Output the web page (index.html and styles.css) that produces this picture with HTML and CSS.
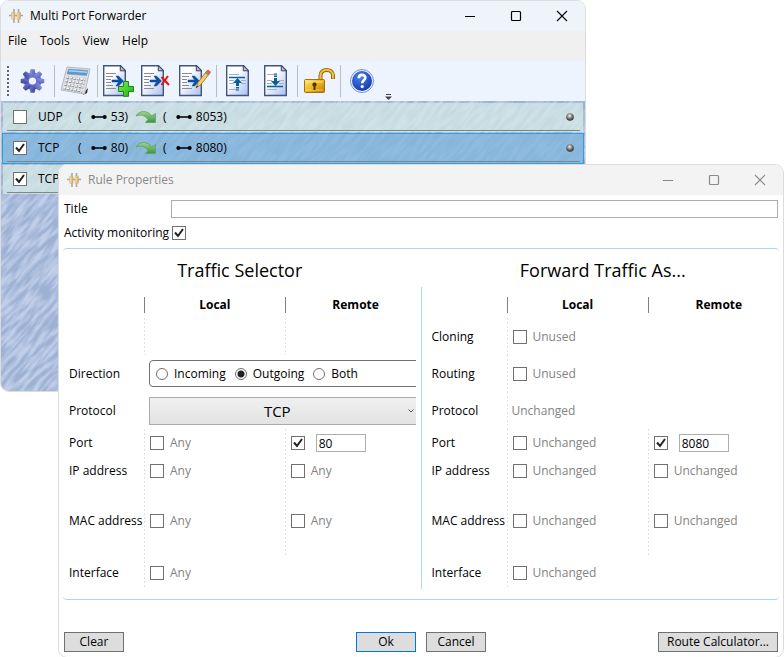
FILE: index.html
```html
<!DOCTYPE html>
<html lang="en">
<head>
<meta charset="utf-8">
<title>Multi Port Forwarder</title>
<link rel="stylesheet" href="styles.css">
</head>
<body>
<svg class="defs" aria-hidden="true">
  <defs>
    <linearGradient id="paper" x1="0" y1="0" x2="1" y2="1"><stop offset=".35" stop-color="#fff"/><stop offset="1" stop-color="#a9bdf0"/></linearGradient>
    <linearGradient id="gold" x1="0" y1="0" x2="1" y2="1"><stop offset="0" stop-color="#ffe98a"/><stop offset=".5" stop-color="#eeb51c"/><stop offset="1" stop-color="#b87800"/></linearGradient>
    <linearGradient id="leaf" x1="0" y1="0" x2="0" y2="1"><stop offset="0" stop-color="#a2d490"/><stop offset="1" stop-color="#3f9440"/></linearGradient>
    <linearGradient id="violet" x1="0" y1="0" x2="1" y2="1"><stop offset="0" stop-color="#8d96e6"/><stop offset="1" stop-color="#3a3f9c"/></linearGradient>
    <linearGradient id="lamp" x1="0" y1="0" x2="1" y2="0"><stop offset="0" stop-color="#fbeab8"/><stop offset="1" stop-color="#dfa548"/></linearGradient>
    <linearGradient id="plus" x1="0" y1="0" x2="1" y2="1"><stop offset="0" stop-color="#7df05a"/><stop offset="1" stop-color="#1cb010"/></linearGradient>
    <radialGradient id="ball" cx=".45" cy=".35" r=".6"><stop offset="0" stop-color="#fff"/><stop offset=".4" stop-color="#999"/><stop offset="1" stop-color="#333"/></radialGradient>
    <radialGradient id="blue" cx=".4" cy=".3" r=".8"><stop offset="0" stop-color="#4f83ea"/><stop offset="1" stop-color="#0b32a8"/></radialGradient>
    <filter id="weave" x="0" y="0" width="100%" height="100%" color-interpolation-filters="sRGB">
      <feTurbulence type="fractalNoise" baseFrequency=".05 .26" numOctaves="2" seed="8"/>
      <feColorMatrix values="0 0 0 0 .5  0 0 0 0 .6  0 0 0 0 .76  3 0 0 0 -1"/>
    </filter>
    <symbol id="app" viewBox="0 0 14 14">
      <path d="M0 6.500H14M5 0V14M9.500 0V14" stroke="#a7a9ae" stroke-width="1.600" fill="none"/>
      <rect x="2.500" y="3" width="3.500" height="7.500" rx="1" fill="url(#lamp)" stroke="#b4a68c" stroke-width=".5"/><rect x="8" y="3" width="3.500" height="7.500" rx="1" fill="url(#lamp)" stroke="#b4a68c" stroke-width=".5"/>
    </symbol>
    <symbol id="page" viewBox="0 0 24 32">
      <path d="M.7.7H17.500L22.300 5.500V30.500H.7Z" fill="url(#paper)" stroke="#42557f" stroke-width="1.400"/>
      <path d="M17.300.7V5.800H22.500Z" fill="#b9c0cc" stroke="#37425e"/>
    </symbol>
    <symbol id="rule" viewBox="0 0 32 32">
      <use href="#page" width="24" height="32"/>
      <path d="M3 8.500H13M3 11.500H10M3 14.500H8M3 17.500H8M3 20.500H10M3 23.500H13" stroke="#8a8d99"/>
      <path d="M9 15H15.500L13 11H15.500L20.500 16L15.500 21H13L15.500 17H9Z" fill="#0a4fa6" stroke="#0a4fa6" stroke-width=".5"/>
    </symbol>
    <symbol id="lines" viewBox="0 0 24 32">
      <use href="#page" width="24" height="32"/>
      <path d="M3 9.500H13M3 15.500H8M15 15.500H20M3 18.500H8M15 18.500H20M3 24.500H13" stroke="#a4b0c9"/>
    </symbol>
    <symbol id="link" viewBox="0 0 16 6"><path d="M2 3H14" stroke="#000" stroke-width="1.500"/><circle cx="2.300" cy="3" r="2"/><circle cx="13.700" cy="3" r="2"/></symbol>
    <symbol id="jump" viewBox="0 0 22 14"><path d="M1 6C4 0 13 0 16.500 6L20.500 3.500V12.500H10.500L13 9.500C10 5.500 6 4 1 6Z" fill="url(#leaf)" stroke="#5ba65a" stroke-width=".8"/></symbol>
    <symbol id="min" viewBox="0 0 12 12"><path d="M1 6.500H11" stroke="currentColor"/></symbol>
    <symbol id="max" viewBox="0 0 12 12"><rect x="1.500" y="1.500" width="9" height="9" rx="1" fill="none" stroke="currentColor" stroke-width="1.200"/></symbol>
    <symbol id="close" viewBox="0 0 12 12"><path d="M1 1L11 11M11 1L1 11" stroke="currentColor" stroke-width="1.100"/></symbol>
  </defs>
</svg>
<main class="desktop">
  <section class="window main-window" aria-label="Multi Port Forwarder">
    <header class="titlebar">
      <svg class="app-icon"><use href="#app"/></svg>
      <span class="caption">Multi Port Forwarder</span>
      <button class="winbtn" aria-label="Minimize"><svg><use href="#min"/></svg></button>
      <button class="winbtn" aria-label="Maximize"><svg><use href="#max"/></svg></button>
      <button class="winbtn" aria-label="Close"><svg><use href="#close"/></svg></button>
    </header>
    <nav class="menu"><button>File</button><button>Tools</button><button>View</button><button>Help</button></nav>
    <div class="toolbar">
      <span class="grip"></span>
      <div class="group">
        <button aria-label="Settings"><svg viewBox="0 0 32 32"><g transform="translate(15.500 16)"><g fill="url(#violet)"><circle r="8.800"/><path id="teeth" d="M-2.800-8L-2-11.800H2L2.800-8V8L2 11.800H-2L-2.800 8Z"/><use href="#teeth" transform="rotate(45)"/><use href="#teeth" transform="rotate(90)"/><use href="#teeth" transform="rotate(135)"/></g><circle r="5" fill="#6a70cc"/><circle r="3.600" fill="#edf4fd"/></g></svg></button>
      </div>
      <div class="group">
        <button aria-label="Calculator"><svg viewBox="0 0 32 32"><path d="M24 28L28 23L27 28L23 30Z" fill="#222"/><path d="M7 2L30 4L24.500 29L1 25Z" fill="#dfe1e5" stroke="#b6b9c0"/><path d="M8.500 4L28 5.500L26.500 10.500L7 9Z" fill="#5d97cb" stroke="#6f9cc4" stroke-width=".6"/><path d="M9 5L27.500 6.500L27 8L8.500 6.500Z" fill="#a9d2ee"/><path d="M6.500 12.500L25.500 15M5.500 16L24.500 18.500M4.500 19.500L23.500 22.500M3.500 23L22.500 26.500" stroke="#8b8f98" stroke-width="2.600" stroke-dasharray="2.600 1"/><path d="M6.500 12L25.500 14.500M5.500 15.500L24.500 18M4.500 19L23.500 22M3.500 22.500L22.500 26" stroke="#fff" stroke-width="1.600" stroke-dasharray="2 1.600"/></svg></button>
      </div>
      <div class="group">
        <button aria-label="Add rule"><svg viewBox="0 0 32 32"><use href="#rule" width="32" height="32"/><path d="M20.500 16.500H25.500V21.500H30.500V26.500H25.500V31.300H20.500V26.500H15.500V21.500H20.500Z" fill="url(#plus)" stroke="#168a10"/></svg></button>
        <button aria-label="Delete rule"><svg viewBox="0 0 32 32"><use href="#rule" width="32" height="32"/><path d="M20.500 12L28 20M27 11L20.500 20" stroke="#e80c0c" stroke-width="1.900"/></svg></button>
        <button aria-label="Edit rule"><svg viewBox="0 0 32 32"><use href="#rule" width="32" height="32"/><path d="M17 23L19 17.500L28 5.500L31 8L21.500 20Z" fill="#f2cf63" stroke="#a06a18" stroke-width=".8"/><path d="M27 7L29 4.500L32 7L30 9.500Z" fill="#df5a5a"/><path d="M26 8L27 7L30 9.500L29 10.500Z" fill="#67a070"/><path d="M17 23L18 20.500L19 21.500Z" fill="#222"/></svg></button>
      </div>
      <div class="group">
        <button aria-label="Move up"><svg viewBox="0 0 32 32"><use href="#lines" x="4" width="24" height="32"/><path d="M7 12.500H23" stroke="#0b6597" stroke-width="1.300"/><path d="M15.500 13L20 18H17V21H14V18H11ZM14 22H17V23.500H14ZM14 24.500H17V25.500H14Z" fill="#0b5e96"/></svg></button>
        <button aria-label="Move down"><svg viewBox="0 0 32 32"><use href="#lines" x="4" width="24" height="32"/><path d="M7 21.500H23" stroke="#0b6597" stroke-width="1.300"/><path d="M15.500 21L20 16H17V13H14V16H11ZM14 10.500H17V12H14ZM14 8.500H17V9.500H14Z" fill="#0b5e96"/></svg></button>
      </div>
      <div class="group">
        <button aria-label="Unlock"><svg viewBox="0 0 32 32"><path d="M17.500 15V10.500C17.500 3 30 3 30 10.500V14" fill="none" stroke="#94600a" stroke-width="4"/><path d="M17.500 15V10.500C17.500 3 30 3 30 10.500V13.500" fill="none" stroke="#f0c03a" stroke-width="2.200"/><rect x="1.500" y="14.500" width="20" height="13" rx="1" fill="url(#gold)" stroke="#a87108"/><path d="M3 17H20M3 25H20" stroke="#fff0a0" opacity=".6"/><path d="M11.500 17.500a2 2 0 0 1 1 3.800V25H10.500V21.300a2 2 0 0 1 1-3.800Z" fill="#493506"/></svg></button>
      </div>
      <div class="group">
        <button aria-label="Help"><svg viewBox="0 0 32 32"><circle cx="16" cy="16" r="11.500" fill="#e8f0ff" stroke="#7793d5"/><circle cx="16" cy="16" r="10" fill="url(#blue)"/><path d="M12.800 13.200C12.800 8.700 19.600 8.900 19.300 13C19.100 15.300 16.200 15.400 16.200 18.300" fill="none" stroke="#fff" stroke-width="2.600"/><circle cx="16.200" cy="21.600" r="1.600" fill="#fff"/></svg></button>
      </div>
      <button class="overflow" aria-label="More"><svg viewBox="0 0 7 6"><path d="M1 .5H6" stroke="#444"/><path d="M0 2.500H7L3.500 6Z" fill="#444"/></svg></button>
    </div>
    <div class="list">
      <svg class="texture" aria-hidden="true"><g transform="rotate(-48)"><rect x="-500" y="-100" width="1200" height="1100" filter="url(#weave)"/></g></svg>
      <div class="rule">
        <input type="checkbox" aria-label="Enable UDP rule"><span class="proto">UDP</span>
        <span class="from">( <svg class="link"><use href="#link"/></svg> 53)</span><svg class="jump"><use href="#jump"/></svg><span class="to">( <svg class="link"><use href="#link"/></svg> 8053)</span>
        <svg class="led" viewBox="0 0 8 8"><circle cx="4" cy="4" r="3.800" fill="url(#ball)"/></svg>
      </div>
      <div class="rule selected">
        <input type="checkbox" checked aria-label="Enable TCP rule"><span class="proto">TCP</span>
        <span class="from">( <svg class="link"><use href="#link"/></svg> 80)</span><svg class="jump"><use href="#jump"/></svg><span class="to">( <svg class="link"><use href="#link"/></svg> 8080)</span>
        <svg class="led" viewBox="0 0 8 8"><circle cx="4" cy="4" r="3.800" fill="url(#ball)"/></svg>
      </div>
      <div class="rule"><input type="checkbox" checked aria-label="Enable third rule"><span class="proto">TCP</span></div>
    </div>
  </section>

  <section class="window dialog" aria-label="Rule Properties">
    <header class="titlebar">
      <svg class="app-icon"><use href="#app"/></svg>
      <span class="caption">Rule Properties</span>
      <button class="winbtn" aria-label="Minimize"><svg><use href="#min"/></svg></button>
      <button class="winbtn" aria-label="Maximize"><svg><use href="#max"/></svg></button>
      <button class="winbtn" aria-label="Close"><svg><use href="#close"/></svg></button>
    </header>
    <form class="form" onsubmit="return false">
      <div class="top">
        <label for="title">Title</label><input class="text" type="text" id="title">
        <label for="monitor">Activity monitoring</label><input type="checkbox" id="monitor" checked>
      </div>
      <div class="box">
        <section class="panel">
          <h2>Traffic Selector</h2>
          <div class="fields">
            <span></span><b class="head">Local</b><b class="head">Remote</b>
            <span></span><div class="cell"></div><div class="cell"></div>
            <span>Direction</span>
            <div class="cell wide"><div class="radios"><label><input type="radio" name="dir">Incoming</label><label><input type="radio" name="dir" checked>Outgoing</label><label><input type="radio" name="dir">Both</label></div></div>
            <label for="protocol">Protocol</label>
            <div class="cell wide"><div class="combo"><select id="protocol"><option>TCP</option></select><svg viewBox="0 0 6 4"><path d="M.5.5L3 3L5.500.5" fill="none" stroke="#555"/></svg></div></div>
            <span>Port</span><div class="cell"><label><input type="checkbox">Any</label></div><div class="cell"><input type="checkbox" checked aria-label="Remote port"><input class="text port" type="text" value="80" aria-label="Remote port value"></div>
            <span>IP address</span><div class="cell"><label><input type="checkbox">Any</label></div><div class="cell"><label><input type="checkbox">Any</label></div>
            <span>MAC address</span><div class="cell"><label><input type="checkbox">Any</label></div><div class="cell"><label><input type="checkbox">Any</label></div>
            <span>Interface</span><div class="cell"><label><input type="checkbox">Any</label></div><div></div>
          </div>
        </section>
        <div class="divider"></div>
        <section class="panel">
          <h2>Forward Traffic As...</h2>
          <div class="fields">
            <span></span><b class="head">Local</b><b class="head">Remote</b>
            <span>Cloning</span><div class="cell"><label><input type="checkbox">Unused</label></div><div></div>
            <span>Routing</span><div class="cell"><label><input type="checkbox">Unused</label></div><div></div>
            <span>Protocol</span><div class="cell"><output>Unchanged</output></div><div></div>
            <span>Port</span><div class="cell"><label><input type="checkbox">Unchanged</label></div><div class="cell"><input type="checkbox" checked aria-label="Forward port"><input class="text port" type="text" value="8080" aria-label="Forward port value"></div>
            <span>IP address</span><div class="cell"><label><input type="checkbox">Unchanged</label></div><div class="cell"><label><input type="checkbox">Unchanged</label></div>
            <span>MAC address</span><div class="cell"><label><input type="checkbox">Unchanged</label></div><div class="cell"><label><input type="checkbox">Unchanged</label></div>
            <span>Interface</span><div class="cell"><label><input type="checkbox">Unchanged</label></div><div></div>
          </div>
        </section>
      </div>
      <footer class="actions">
        <button>Clear</button>
        <div class="pair"><button class="default">Ok</button><button>Cancel</button></div>
        <button class="route">Route Calculator...</button>
      </footer>
    </form>
  </section>
</main>
</body>
</html>
```
FILE: styles.css
```css
* { box-sizing: border-box; }
body { margin: 0; background: #fff; color: #000; font: 12px/16px "Open Sans", "Noto Sans", sans-serif; }
button, input, select { font: inherit; color: inherit; margin: 0; padding: 0; }
button { background: none; border: 0; }
svg { display: block; flex: none; }
.defs { position: absolute; width: 0; height: 0; }

.desktop { display: grid; align-items: start; }
.window { grid-area: 1 / 1; border: 1px solid #dcdcdc; border-radius: 9px; overflow: hidden; }
.main-window { margin-right: 198px; }
.dialog { margin: 164px 0 0 58px; background: #fff; position: relative; }

.titlebar { display: flex; align-items: center; height: 30px; padding-left: 8px; background: #eef4f9; }
.dialog .titlebar { background: #f3f3f3; color: #8a8a8a; }
.app-icon { width: 14px; height: 14px; }
.caption { flex: 1; padding-left: 7px; }
.winbtn { display: grid; place-items: center; width: 46px; height: 30px; }
.winbtn svg { width: 12px; height: 12px; }

.menu { display: flex; gap: 13px; height: 30px; padding: 2px 7px 12px; background: #f0f0f0; }
.toolbar { display: flex; align-items: center; height: 40px; padding-left: 6px; background: #edf4fd; }
.grip { width: 2px; height: 30px; margin-right: 3px; background: repeating-linear-gradient(#666 0 2px, transparent 2px 4px); }
.group { display: flex; gap: 6px; padding: 0 5px; }
.group + .group { border-left: 1px solid #b9bec6; }
.group svg { width: 32px; height: 32px; }
.overflow { align-self: flex-end; padding: 0 0 1px 2px; }
.overflow svg { width: 7px; height: 6px; }

.list { position: relative; min-height: 290px; padding: 1px; background: #c0cee9; }
.texture { position: absolute; inset: 0; width: 100%; height: 100%; opacity: .55; }
.rule { position: relative; display: flex; align-items: center; height: 31px; border: 1px solid transparent; padding: 0 9px 1px 10px; background: rgba(212, 232, 228, .75) padding-box; }
.rule::after { content: ""; position: absolute; left: 4px; right: 3px; bottom: 1px; border-bottom: 1px solid #7f8588; }
.rule.selected { border-color: #2a9fe2; background: rgba(128, 182, 221, .78); }
.proto { width: 40px; margin-left: 11px; }
.from, .to { display: flex; align-items: center; white-space: pre; }
.from { width: 57px; }
.from .link, .to .link { margin: 0 1px 0 6px; }
.link { width: 16px; height: 6px; }
.jump { width: 22px; height: 14px; margin-right: 6px; }
.led { width: 8px; height: 8px; margin-left: auto; }

input[type="checkbox"], input[type="radio"] { appearance: none; flex: none; width: 14px; height: 14px; border: 1px solid #707070; background: #fff center no-repeat; }
input[type="checkbox"]:checked { background-image: url("data:image/svg+xml,%3Csvg xmlns='http://www.w3.org/2000/svg' width='12' height='12'%3E%3Cpath d='M2 5.500L5 9L10 2' fill='none' stroke='%23212121' stroke-width='2'/%3E%3C/svg%3E"); }
input[type="radio"] { width: 12px; height: 12px; border-radius: 50%; }
input[type="radio"]:checked { background-image: radial-gradient(circle, #212121 0 3px, transparent 4px); }
.text { height: 18px; border: 1px solid #abadb3; background: #fff; padding: 0 2px; min-width: 0; }

.form { padding: 5px; }
.top { display: grid; grid-template-columns: 102px 1fr; align-items: center; row-gap: 7px; column-gap: 5px; }
.top label { white-space: nowrap; }
.top input[type="checkbox"] { margin-left: 1px; }
.box { display: grid; grid-template-columns: minmax(0, 1fr) 1px minmax(0, 1fr); margin: 7px -1px 0; padding-bottom: 10px; border: solid #add8e6; border-width: 1px 0; border-radius: 4px; }
.panel { overflow: hidden; margin: 0 5px 0 6px; }
.divider { background: #add8e6; margin-top: 38px; }
.divider + .panel { margin: 0 0 0 10px; }
h2 { margin: 8px 5px 14px 0; font-size: 18px; line-height: 26px; font-weight: 400; text-align: center; }
.fields { display: grid; grid-template-columns: 75px 1fr 1fr; grid-template-rows: 21px 37px 37px 37px 28px 28px 72px 32px; width: calc(100% + 10px); align-items: center; white-space: nowrap; }
.head { align-self: start; border-left: 1px solid #808080; text-align: center; }
.cell { display: flex; align-items: center; align-self: stretch; padding-left: 6px; background: repeating-linear-gradient(#e2e2e2 0 2px, transparent 2px 4px) left / 1px 100% no-repeat; }
.cell label { display: flex; align-items: center; gap: 6px; color: #838383; }
.cell output { color: #838383; margin-left: -1px; }
.cell.wide { grid-column: 2 / 4; padding-left: 5px; background: none; }
.radios { display: flex; align-items: center; gap: 9px; width: 100%; height: 27px; padding-left: 6px; border: 1px solid #707070; border-radius: 4px; }
.cell .radios label { color: #000; }
.combo { position: relative; width: 100%; }
.combo select { appearance: none; display: block; width: 100%; height: 28px; padding-right: 20px; border: 1px solid #acacac; background: linear-gradient(#f0f0f0, #e3e3e3); font-size: 15px; text-align-last: center; }
.combo svg { position: absolute; right: 12px; top: 12px; width: 6px; height: 4px; }
.port { width: 50px; margin-left: 11px; }

.actions { display: grid; grid-template-columns: 1fr auto 1fr; margin-top: 32px; }
.actions button { width: 60px; height: 20px; border: 1px solid #707070; background: #ddd; }
.actions .default { border-color: #0078d7; }
.pair { display: flex; gap: 10px; }
.actions .route { width: 120px; justify-self: end; }
```
